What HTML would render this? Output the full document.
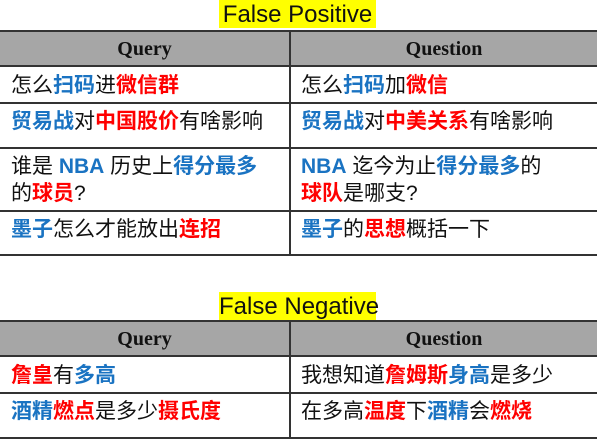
<!DOCTYPE html><html><head><meta charset="utf-8"><style>
body{margin:0;width:597px;height:445px;background:#fff;position:relative;overflow:hidden;font-family:"Liberation Sans","Noto Sans CJK SC",sans-serif;}
.t{position:absolute;left:219px;width:157px;height:28px;background:#ffff00;font-size:24px;line-height:29px;text-align:center;color:#111;white-space:nowrap;font-family:"Liberation Sans",sans-serif;}
.hd{position:absolute;left:0;width:597px;height:37px;background:#a6a6a6;border-top:2px solid #333;border-bottom:2px solid #333;box-sizing:border-box;}
.hd div{position:absolute;top:0;height:33px;line-height:35px;font-family:"Liberation Serif",serif;font-weight:bold;font-size:20px;text-align:center;color:#111}
.vl{position:absolute;left:289px;width:2px;background:#333}
.hl{position:absolute;left:0;width:597px;height:2px;background:#333}
.c{position:absolute;font-size:21px;line-height:27px;color:#111;white-space:nowrap}
.b{color:#1a73c2;font-weight:bold}.r{color:#f00;font-weight:bold}
</style></head><body>
<div class="t" style="top:0">False Positive</div>
<div class="hd" style="top:30px"><div style="left:0;width:289px">Query</div><div style="left:291px;width:306px">Question</div></div>
<div class="vl" style="top:30px;height:226px"></div>
<div class="hl" style="top:102px"></div><div class="hl" style="top:147px"></div><div class="hl" style="top:210px"></div><div class="hl" style="top:254px"></div>
<div class="c" style="left:11px;top:72px">怎么<span class="b">扫码</span>进<span class="r">微信群</span></div>
<div class="c" style="left:301px;top:72px">怎么<span class="b">扫码</span>加<span class="r">微信</span></div>
<div class="c" style="left:11px;top:108px"><span class="b">贸易战</span>对<span class="r">中国股价</span>有啥影响</div>
<div class="c" style="left:301px;top:108px"><span class="b">贸易战</span>对<span class="r">中美关系</span>有啥影响</div>
<div class="c" style="left:11px;top:153px">谁是 <span class="b">NBA</span> 历史上<span class="b">得分最多</span><br>的<span class="r">球员</span>?</div>
<div class="c" style="left:301px;top:153px"><span class="b">NBA</span> 迄今为止<span class="b">得分最多</span>的<br><span class="r">球队</span>是哪支?</div>
<div class="c" style="left:11px;top:216px"><span class="b">墨子</span>怎么才能放出<span class="r">连招</span></div>
<div class="c" style="left:301px;top:216px"><span class="b">墨子</span>的<span class="r">思想</span>概括一下</div>

<div class="t" style="top:292px">False Negative</div>
<div class="hd" style="top:320px"><div style="left:0;width:289px">Query</div><div style="left:291px;width:306px">Question</div></div>
<div class="vl" style="top:320px;height:119px"></div>
<div class="hl" style="top:392px"></div><div class="hl" style="top:437px"></div>
<div class="c" style="left:11px;top:362px"><span class="r">詹皇</span>有<span class="b">多高</span></div>
<div class="c" style="left:301px;top:362px">我想知道<span class="r">詹姆斯</span><span class="b">身高</span>是多少</div>
<div class="c" style="left:11px;top:398px"><span class="b">酒精</span><span class="r">燃点</span>是多少<span class="r">摄氏度</span></div>
<div class="c" style="left:301px;top:398px">在多高<span class="r">温度</span>下<span class="b">酒精</span>会<span class="r">燃烧</span></div>
</body></html>
